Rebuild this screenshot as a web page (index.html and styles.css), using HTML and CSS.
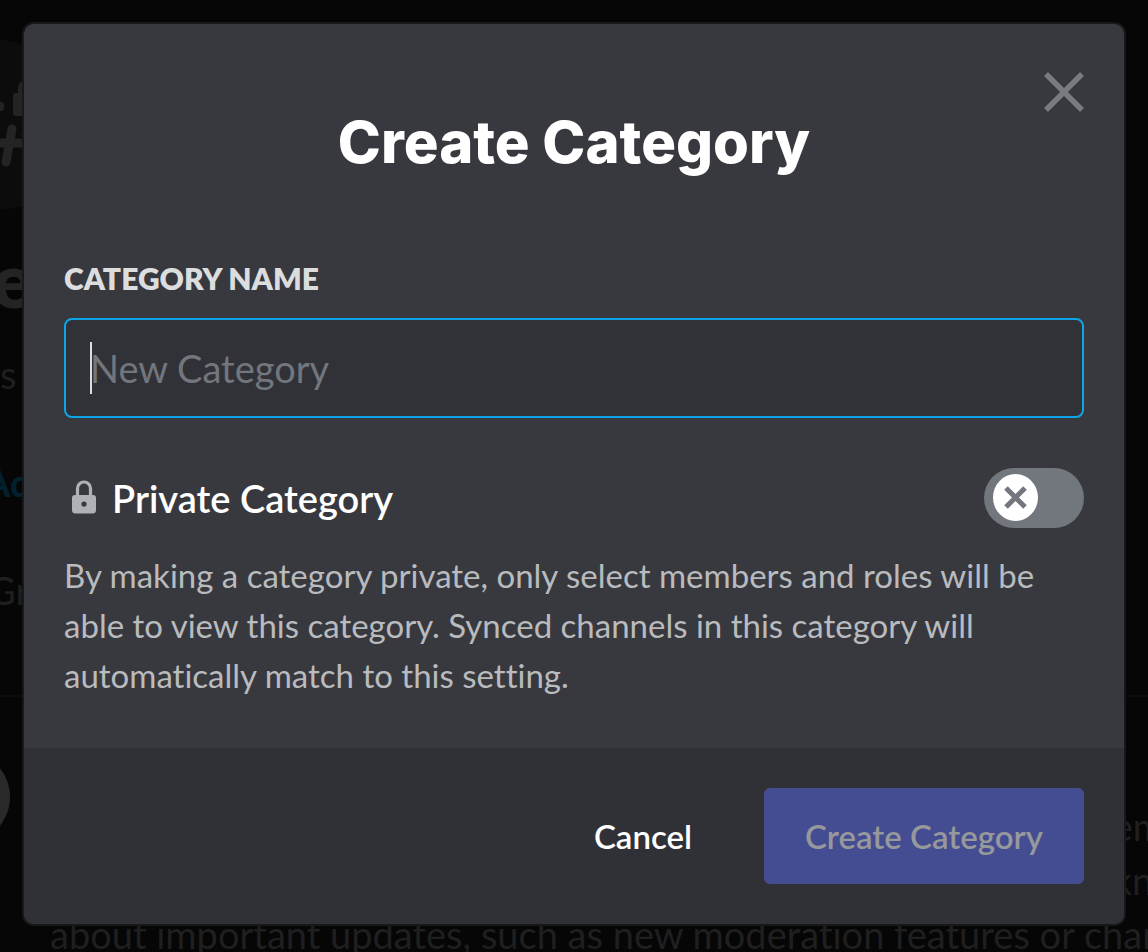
FILE: index.html
```html
<!DOCTYPE html>
<html lang="en">
<head>
    <meta charset="UTF-8">
    <meta name="viewport" content="width=device-width, initial-scale=1.0">
    <title>Create Category</title>
    <link rel="stylesheet" href="styles.css">
</head>
<body>
    <!-- Dimmed page behind the dialog -->
    <div class="page" aria-hidden="true">
        <svg class="page-icon" width="90" height="176" viewBox="0 0 90 176">
            <circle cx="-3" cy="88" r="85" fill="#0c0c0d"/>
            <rect x="-10" y="65" width="14" height="9" rx="3" fill="#242424"/>
            <path d="M20 58v-6a9 9 0 0 1 18 0v6" fill="none" stroke="#242424" stroke-width="4"/>
            <rect x="13" y="56" width="30" height="23" rx="3" fill="#242424"/>
            <path d="M-4 106h40" fill="none" stroke="#242424" stroke-width="9"/>
            <path d="M12 92L6 125" fill="none" stroke="#242424" stroke-width="9" stroke-linecap="round"/>
        </svg>
        <p class="page-title">e</p>
        <p class="page-text">s</p>
        <p class="page-link">Ad</p>
        <p class="page-text">Gr</p>
        <div class="page-post">
            <svg class="page-avatar" width="12" height="96" viewBox="0 0 12 96">
                <circle cx="-36" cy="48" r="46" fill="#2a2a2a"/>
            </svg>
            <div class="page-lines">
                <p>em</p>
                <p>kn</p>
            </div>
        </div>
        <p class="page-bottom">about important updates, such as new moderation features or chan</p>
    </div>

    <!-- Create Category dialog -->
    <div class="overlay">
        <form class="modal" role="dialog" aria-labelledby="modal-title">
            <div class="modal-body">
                <button type="button" class="close" aria-label="Close">
                    <svg width="40" height="40" viewBox="0 0 40 40">
                        <path d="M2 2l36 36M38 2L2 38" fill="none" stroke="#7a7b7f" stroke-width="5.500"/>
                    </svg>
                </button>
                <h1 id="modal-title">Create Category</h1>

                <label class="field-label" for="category-name">Category Name</label>
                <input class="field" type="text" id="category-name" placeholder="New Category">

                <div class="switch-row">
                    <svg class="lock" width="24" height="36" viewBox="0 0 24 36">
                        <path d="M5.5 17V8.500a6.500 6.500 0 0 1 13 0V17" fill="none" stroke="#b0b1b5" stroke-width="3.200"/>
                        <path fill="#b0b1b5" fill-rule="evenodd" d="M3 15h18a3 3 0 0 1 3 3v12a3.500 3.500 0 0 1-3.500 3.500h-17A3.500 3.500 0 0 1 0 30V18a3 3 0 0 1 3-3zM12 21.500a2.600 2.600 0 1 0 0 5.200 2.600 2.600 0 0 0 0-5.200z"/>
                    </svg>
                    <label class="switch-label" for="private">Private Category</label>
                    <span class="switch">
                        <input type="checkbox" id="private" role="switch" aria-describedby="private-note">
                        <svg class="knob" width="46" height="48" viewBox="0 0 46 48">
                            <ellipse cx="23.500" cy="23.500" rx="22.500" ry="23.500" fill="#fff"/>
                            <path d="M14 14l19 19M33 14l-19 19" fill="none" stroke="#72767d" stroke-width="5"/>
                        </svg>
                    </span>
                </div>
                <p class="note" id="private-note">By making a category private, only select members and roles will be able to view this category. Synced channels in this category will automatically match to this setting.</p>
            </div>

            <div class="modal-footer">
                <button type="button" class="btn cancel">Cancel</button>
                <button type="submit" class="btn create" disabled>Create Category</button>
            </div>
        </form>
    </div>
</body>
</html>
```
FILE: styles.css
```css
* {
    box-sizing: border-box;
}

body {
    margin: 0;
    min-height: 100vh;
    overflow: hidden;
    background-color: #060606;
    font-family: Lato, "Open Sans", sans-serif;
    font-variant-ligatures: none;
}

h1, p {
    margin: 0;
}

/* Dimmed page */
.page {
    height: 100vh;
    overflow: hidden;
    padding-top: 37px;
    color: #1f1f20;
    font-size: 38px;
    line-height: 54px;
}

.page-icon, .page-avatar {
    display: block;
}

.page-title {
    margin-top: 26px;
    margin-left: -8px;
    color: #242424;
    font-size: 76px;
    font-weight: 800;
    line-height: 80px;
}

.page-text {
    margin-top: 28px;
}

.page-link {
    margin: 54px 0 0 -16px;
    color: #03202e;
    font-weight: 700;
}

.page-link + .page-text {
    margin: 54px 0 0 -12px;
}

.page-post {
    display: flex;
    justify-content: space-between;
    margin-top: 78px;
    padding-top: 52px;
    border-top: 2px solid #0c0c0d;
}

.page-lines {
    margin-top: 50px;
    margin-right: -16px;
}

.page-bottom {
    padding-left: 50px;
    white-space: nowrap;
}

/* Dialog */
.overlay {
    position: absolute;
    inset: 0;
    padding: 24px;
}

.modal {
    border-radius: 10px;
    overflow: hidden;
    background-color: #38393f;
    box-shadow: 0 0 0 2px #17181a;
}

.modal-body {
    position: relative;
    padding: 80px 40px 48px;
}

.close {
    position: absolute;
    top: 48px;
    right: 40px;
    padding: 0;
    border: none;
    background: none;
    cursor: pointer;
}

.close svg {
    display: block;
}

h1 {
    color: #fff;
    font-family: Inter, "Open Sans", sans-serif;
    font-size: 58px;
    font-weight: 800;
    line-height: 76px;
    text-align: center;
}

.field-label {
    display: block;
    margin-top: 80px;
    color: #dcddde;
    font-size: 30px;
    font-weight: 800;
    line-height: 36px;
    text-transform: uppercase;
}

/* The gradient draws the text caret */
.field {
    display: block;
    width: 100%;
    height: 100px;
    margin-top: 22px;
    padding: 0 24px;
    border: 2px solid #0fa4ea;
    border-radius: 8px;
    outline: none;
    background: #313237 linear-gradient(#dcddde, #dcddde) 24px center / 2px 52px no-repeat;
    color: #dcddde;
    font-family: inherit;
    font-size: 38px;
}

.field::placeholder {
    color: #72767d;
    opacity: 1;
}

.switch-row {
    display: flex;
    align-items: center;
    margin-top: 50px;
}

.lock {
    margin: 0 16px 0 8px;
}

.switch-label {
    flex: 1;
    color: #fff;
    font-size: 38px;
    font-weight: 600;
    line-height: 60px;
}

.switch {
    position: relative;
    display: block;
}

.switch input {
    display: block;
    appearance: none;
    width: 100px;
    height: 60px;
    margin: 0;
    border-radius: 30px;
    background-color: #72767d;
    cursor: pointer;
}

.knob {
    position: absolute;
    top: 6px;
    left: 8px;
    pointer-events: none;
}

.note {
    margin-top: 22px;
    color: #b9bbbe;
    font-size: 33px;
    line-height: 50px;
}

.modal-footer {
    display: flex;
    justify-content: flex-end;
    gap: 32px;
    padding: 40px;
    background-color: #303136;
}

.btn {
    height: 96px;
    padding: 0 40px;
    border: none;
    border-radius: 6px;
    background: none;
    color: #fff;
    font-family: inherit;
    font-size: 33px;
    font-weight: 600;
    cursor: pointer;
}

.create {
    min-width: 320px;
    background-color: #444c92;
    color: #97989b;
    cursor: not-allowed;
}
```
